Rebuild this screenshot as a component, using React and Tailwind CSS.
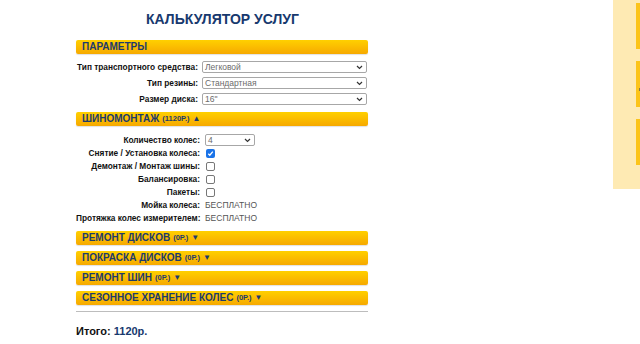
import React from 'react';

const font = { fontFamily: '"Liberation Sans", Arial, sans-serif' };

const Chevron = () => (
  <svg width="7" height="5" viewBox="0 0 7 5" className="shrink-0">
    <path d="M1 1 L3.5 3.5 L6 1" fill="none" stroke="#333" strokeWidth="1.2" />
  </svg>
);

const Select = ({ value, width }) => (
  <div className={`flex items-center justify-between h-[12px] border border-[#a7a7a7] rounded-[2px] bg-white pl-[2px] pr-[3px] ${width}`}>
    <span className="text-[8.5px] leading-none text-[#6b6b6b]">{value}</span>
    <Chevron />
  </div>
);

const Checkbox = ({ checked }) =>
  checked ? (
    <div className="w-[9px] h-[9px] rounded-[2px] bg-[#1a73e8] flex items-center justify-center">
      <svg width="7" height="7" viewBox="0 0 7 7">
        <path d="M1.3 3.7 L2.8 5.2 L5.8 1.6" fill="none" stroke="#fff" strokeWidth="1.3" />
      </svg>
    </div>
  ) : (
    <div className="w-[9px] h-[9px] rounded-[2px] border border-[#777] bg-white" />
  );

const Bar = ({ title, price, arrow }) => (
  <div className="h-[14px] rounded-[2px] bg-gradient-to-b from-[#ffd000] to-[#f6a900] shadow-[0_1px_1px_rgba(0,0,0,0.12)] flex items-center px-[6px] text-[#1d3b6b] font-bold">
    <span className="text-[10px] leading-none">{title}</span>
    {price && <span className="text-[7.5px] leading-none ml-[3px]">({price})</span>}
    {arrow && <span className="text-[8px] leading-none ml-[3px]">{arrow}</span>}
  </div>
);

const Row = ({ label, children, labelW, gap }) => (
  <div className="flex items-center h-[12px]">
    <div className={`${labelW} text-right text-[8.3px] font-bold text-[#111] leading-none shrink-0 whitespace-nowrap`}>{label}</div>
    <div className={`flex items-center text-[8.5px] leading-none ${gap}`}>{children}</div>
  </div>
);

export default function App() {
  const free = <span className="text-[8.5px] text-[#555] leading-none">БЕСПЛАТНО</span>;

  return (
    <div className="relative w-[640px] h-[344px] bg-white overflow-hidden" style={font}>
      {/* Side widget */}
      <div className="absolute right-0 top-0 w-[27px] h-[189px] bg-[#feeab3] flex flex-col items-end pt-[3px] gap-[12px]">
        <div className="w-[4px] h-[46px] bg-[#fcc419]" />
        <div className="w-[4px] h-[46px] bg-[#fcc419] relative">
          <div className="absolute left-[3px] top-[27px] w-[1px] h-[3px] bg-[#8a7a40]" />
        </div>
        <div className="w-[4px] h-[46px] bg-[#fcc419]" />
      </div>

      <div className="ml-[76px] w-[292px] pt-[11px]">
        <h1 className="text-center text-[14px] leading-[16px] font-bold text-[#17396e] ml-[1px]">КАЛЬКУЛЯТОР УСЛУГ</h1>

        <div className="mt-[13px]">
          <Bar title="ПАРАМЕТРЫ" />
        </div>
        <div className="flex flex-col gap-[4px] mt-[7px]">
          <Row label="Тип транспортного средства:" labelW="w-[122px]" gap="ml-[4px]">
            <Select value="Легковой" width="w-[165px]" />
          </Row>
          <Row label="Тип резины:" labelW="w-[122px]" gap="ml-[4px]">
            <Select value="Стандартная" width="w-[165px]" />
          </Row>
          <Row label="Размер диска:" labelW="w-[122px]" gap="ml-[4px]">
            <Select value={'16"'} width="w-[165px]" />
          </Row>
        </div>

        <div className="mt-[7px]">
          <Bar title="ШИНОМОНТАЖ" price="1120Р." arrow="▲" />
        </div>
        <div className="flex flex-col gap-[1px] mt-[8px]">
          <Row label="Количество колес:" labelW="w-[124px]" gap="ml-[5px]">
            <Select value="4" width="w-[50px]" />
          </Row>
          <Row label="Снятие / Установка колеса:" labelW="w-[124px]" gap="ml-[6px]">
            <Checkbox checked />
          </Row>
          <Row label="Демонтаж / Монтаж шины:" labelW="w-[124px]" gap="ml-[6px]">
            <Checkbox />
          </Row>
          <Row label="Балансировка:" labelW="w-[124px]" gap="ml-[6px]">
            <Checkbox />
          </Row>
          <Row label="Пакеты:" labelW="w-[124px]" gap="ml-[6px]">
            <Checkbox />
          </Row>
          <Row label="Мойка колеса:" labelW="w-[124px]" gap="ml-[5px]">
            {free}
          </Row>
          <Row label="Протяжка колес измерителем:" labelW="w-[124px]" gap="ml-[5px]">
            {free}
          </Row>
        </div>

        <div className="flex flex-col gap-[6px] mt-[7px]">
          <Bar title="РЕМОНТ ДИСКОВ" price="0Р." arrow="▼" />
          <Bar title="ПОКРАСКА ДИСКОВ" price="0Р." arrow="▼" />
          <Bar title="РЕМОНТ ШИН" price="0Р." arrow="▼" />
          <Bar title="СЕЗОННОЕ ХРАНЕНИЕ КОЛЕС" price="0Р." arrow="▼" />
        </div>

        <div className="mt-[6px] h-[1px] bg-[#bdbdbd]" />

        <div className="mt-[14px] text-[11px] font-bold leading-none">
          <span className="text-[#111]">Итого: </span>
          <span className="text-[#17396e]">1120р.</span>
        </div>
      </div>
    </div>
  );
}
